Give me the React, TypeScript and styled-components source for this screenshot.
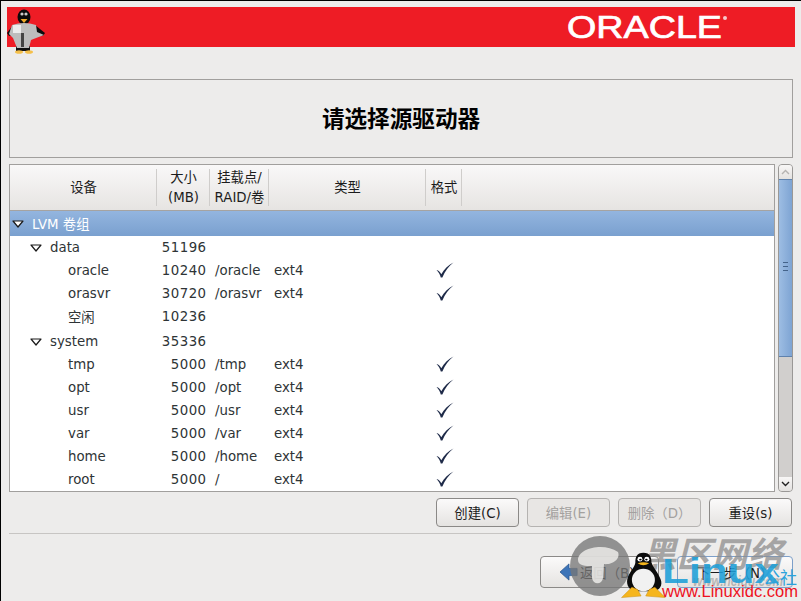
import React from "react";
import styled, { createGlobalStyle } from "styled-components";

const CJK = `"DejaVu Sans", "Noto Sans CJK SC", sans-serif`;

const Global = createGlobalStyle`
  html, body { margin: 0; padding: 0; background: #edeceb; }
  #root { width: 801px; height: 601px; overflow: hidden; }
`;

const Screen = styled.div`
  position: relative;
  box-sizing: border-box;
  width: 801px;
  height: 601px;
  overflow: hidden;
  background: #edeceb;
  border-top: 1px solid #000;
  border-left: 1px solid #000;
  font-family: ${CJK};
  font-size: 13.33px;
  color: #2e3436;
  display: flex;
  flex-direction: column;
  padding: 6px 6px 0 6px;
`;

const Banner = styled.header`
  flex: none;
  height: 40px;
  background: #ee1c25;
  display: flex;
  justify-content: flex-end;
  align-items: flex-start;
  position: relative;
`;

const OracleMark = styled.svg`
  width: 170px;
  height: 40px;
  margin-right: 59px;
`;

const TuxBadge = styled.svg`
  position: absolute;
  left: -1px;
  top: 2px;
  width: 40px;
  height: 48px;
`;

const TitleBox = styled.section`
  flex: none;
  box-sizing: border-box;
  margin: 32px 2px 0 2px;
  height: 79px;
  border: 1px solid #a19f9d;
  display: flex;
  align-items: center;
  justify-content: center;
  padding-bottom: 2px;
  font-size: 22.6px;
  font-weight: 700;
  color: #000;
  font-family: "Noto Sans CJK SC", sans-serif;
`;

const TreeArea = styled.div`
  flex: none;
  display: flex;
  gap: 3px;
  margin: 6px 0 0 2px;
  height: 328px;
`;

const Tree = styled.div`
  box-sizing: border-box;
  width: 766px;
  border: 1px solid #a19f9d;
  background: #fff;
  overflow: hidden;
`;

const columns = "147px 53px 59px 157px 36px 1fr";

const HeaderRow = styled.div`
  display: grid;
  grid-template-columns: ${columns};
  height: 45px;
  background: linear-gradient(#f9f8f8, #e6e4e2);
  border-bottom: 1px solid #a5a3a1;
  align-items: stretch;
  color: #1c1c1c;
`;

const HeaderCell = styled.div`
  display: flex;
  align-items: center;
  justify-content: center;
  text-align: center;
  line-height: 20px;
  position: relative;
  &::after {
    content: "";
    position: absolute;
    right: 0;
    top: 4px;
    bottom: 4px;
    width: 1px;
    background: #cfcdcb;
  }
`;

const HeaderFill = styled.div``;

const Row = styled.div<{ $h?: number; $lift?: number; $selected?: boolean }>`
  display: grid;
  grid-template-columns: ${columns};
  box-sizing: border-box;
  height: ${(p) => p.$h ?? 23}px;
  padding-bottom: ${(p) => p.$lift ?? 0}px;
  align-items: center;
  color: ${(p) => (p.$selected ? "#fff" : "#2e3436")};
  background: ${(p) =>
    p.$selected ? "linear-gradient(#93b5df, #7aa0cf)" : "transparent"};
`;

const NameCell = styled.div<{ $depth: number }>`
  display: flex;
  align-items: center;
  padding-left: ${(p) => [2, 20, 58][p.$depth]}px;
  white-space: nowrap;
`;

const Arrow = styled.svg`
  flex: none;
  width: 12px;
  height: 8px;
  margin-right: 8px;
`;

const SizeCell = styled.div`
  text-align: right;
  padding-right: 3.5px;
  letter-spacing: 0.45px;
`;

const MountCell = styled.div`
  padding-left: 5px;
`;

const TypeCell = styled.div`
  padding-left: 5px;
`;

const FormatCell = styled.div`
  display: flex;
  justify-content: center;
  padding-left: 2px;
`;

const Check = styled.svg`
  display: block;
  width: 18px;
  height: 16px;
  margin-top: -1px;
`;

const ScrollBar = styled.div`
  box-sizing: border-box;
  width: 15px;
  display: flex;
  flex-direction: column;
  background: #d1cfcd;
  border: 1px solid #9a9896;
  border-radius: 4px;
  overflow: hidden;
`;

const ScrollButton = styled.div`
  flex: none;
  height: 14px;
  background: linear-gradient(#f8f7f6, #e4e2e0);
  display: flex;
  align-items: center;
  justify-content: center;
`;

const ScrollThumb = styled.div`
  flex: none;
  height: 178px;
  box-sizing: border-box;
  background: linear-gradient(90deg, #9dbde3, #7ea4d3);
  border-top: 1px solid #5f82ad;
  border-bottom: 1px solid #5f82ad;
  display: flex;
  align-items: center;
  justify-content: center;
  padding-bottom: 4px;
`;

const ThumbGrip = styled.div`
  width: 5px;
  height: 7px;
  border-top: 1px solid #44638a;
  border-bottom: 1px solid #44638a;
  position: relative;
  &::after {
    content: "";
    position: absolute;
    left: 0;
    right: 0;
    top: 3px;
    height: 1px;
    background: #44638a;
  }
`;

const ScrollTrack = styled.div`
  flex: 1;
`;

const ActionBar = styled.div`
  flex: none;
  display: flex;
  justify-content: flex-end;
  gap: 8px;
  margin: 6px 3px 0 0;
`;

const Button = styled.div<{ $disabled?: boolean; $focus?: boolean; $w?: number; $h?: number }>`
  box-sizing: border-box;
  width: ${(p) => p.$w ?? 83}px;
  height: ${(p) => p.$h ?? 29}px;
  border: 1px solid
    ${(p) => (p.$focus ? "#7d9fc9" : p.$disabled ? "#b5b3b1" : "#8b8987")};
  border-radius: 4px;
  background: ${(p) =>
    p.$disabled ? "#e8e6e4" : "linear-gradient(#fbfafa, #e5e3e1)"};
  color: ${(p) => (p.$disabled ? "#a3a19f" : "#1c1c1c")};
  display: flex;
  align-items: center;
  justify-content: center;
  gap: 4px;
  white-space: nowrap;
`;

const BackButton = styled(Button)`
  justify-content: flex-start;
  padding-left: 18px;
  gap: 1px;
`;

const Divider = styled.hr`
  flex: none;
  width: 783px;
  margin: 6px 0 0 2px;
  border: none;
  border-top: 1px solid #c7c5c3;
`;

const NavBar = styled.div`
  flex: none;
  display: flex;
  justify-content: flex-end;
  gap: 18px;
  margin: 22px 2px 0 0;
`;

const NavIcon = styled.svg`
  flex: none;
  width: 20px;
  height: 18px;
`;

const Watermark = styled.svg`
  position: absolute;
  left: 558px;
  top: 529px;
  width: 241px;
  height: 70px;
  pointer-events: none;
`;

const ArrowIcon = () => (
  <Arrow viewBox="0 0 12 8">
    <path
      d="M1 1 H11 L6 7 Z"
      fill="#fff"
      stroke="#1a1a1a"
      strokeWidth="1.2"
      strokeLinejoin="round"
    />
  </Arrow>
);

const CheckMark = () => (
  <Check viewBox="0 0 17 15">
    <path
      d="M0.5 7.5 C2.5 8 4 9.5 5 11.5 C7.5 7 11.5 3 16.5 0.5 C12 4 8.5 9 6 14.5 L4.5 14.5 C4 12 2.5 9.5 0.5 7.5 Z"
      fill="#1e2a48"
    />
  </Check>
);

type Item = {
  name: string;
  size: string;
  mount?: string;
  type?: string;
  depth: number;
  open?: boolean;
  check?: boolean;
  h?: number;
  lift?: number;
};

const items: Item[] = [
  { name: "data", size: "51196", depth: 1, open: true },
  { name: "oracle", size: "10240", mount: "/oracle", type: "ext4", depth: 2, check: true },
  { name: "orasvr", size: "30720", mount: "/orasvr", type: "ext4", depth: 2, check: true },
  { name: "空闲", size: "10236", depth: 2, h: 25, lift: 3 },
  { name: "system", size: "35336", depth: 1, open: true },
  { name: "tmp", size: "5000", mount: "/tmp", type: "ext4", depth: 2, check: true },
  { name: "opt", size: "5000", mount: "/opt", type: "ext4", depth: 2, check: true },
  { name: "usr", size: "5000", mount: "/usr", type: "ext4", depth: 2, check: true },
  { name: "var", size: "5000", mount: "/var", type: "ext4", depth: 2, check: true },
  { name: "home", size: "5000", mount: "/home", type: "ext4", depth: 2, check: true },
  { name: "root", size: "5000", mount: "/", type: "ext4", depth: 2, check: true },
];

const Penguin = () => (
  <g>
    <path d="M16 1 C10 1 9 7 9 13 C9 18 3 26 2 34 C1 42 4 47 8 49 L26 49 C30 47 33 42 31 34 C29 26 24 18 23 13 C23 7 22 1 16 1 Z" fill="#0c0c0c" />
    <ellipse cx="16" cy="35" rx="10" ry="14" fill="#f1f1f1" />
    <ellipse cx="13" cy="9" rx="2.2" ry="3" fill="#fff" />
    <ellipse cx="19" cy="9" rx="2.2" ry="3" fill="#fff" />
    <circle cx="13.4" cy="9.5" r="1.1" fill="#000" />
    <circle cx="18.6" cy="9.5" r="1.1" fill="#000" />
    <path d="M11 14 Q16 11.5 21 14 Q16 19 11 14 Z" fill="#f5b51c" />
    <path d="M6 44 L11 47 L14 55 L-3 57 Z" fill="#f5b51c" stroke="#c98c10" strokeWidth="0.5" />
    <path d="M26 44 L21 47 L18 55 L35 57 Z" fill="#f5b51c" stroke="#c98c10" strokeWidth="0.5" />
  </g>
);

export default function App() {
  return (
    <>
      <Global />
      <Screen>
        <Banner>
          <OracleMark viewBox="0 0 170 40">
            <text
              x="1"
              y="31"
              textLength="155"
              lengthAdjust="spacingAndGlyphs"
              fontFamily="'Liberation Sans', sans-serif"
              fontSize="31"
              fontWeight="400"
              stroke="#fff"
              strokeWidth="0.7"
              fill="#fff"
            >
              ORACLE
            </text>
            <circle cx="159" cy="11" r="2" fill="#f7c9cb" />
          </OracleMark>
          <TuxBadge viewBox="6 9 40 48">
            <ellipse cx="24" cy="17" rx="6.5" ry="7.5" fill="#0a0a0a" />
            <circle cx="22" cy="14" r="1.6" fill="#ccc" />
            <circle cx="26" cy="14" r="1.6" fill="#ccc" />
            <path d="M20.5 19 L27.5 19 L24 23 Z" fill="#f0a928" />
            <path d="M13 25 L7 33 L9 36 L16 34 Z M35 25 L45 33 L43 36 L34 34 Z" fill="#0c0c0c" />
            <path d="M16 46 H30 V51 H16 Z" fill="#111" />
            <path d="M12 25 Q24 21 36 25 L37 32 L44 35 Q36 38 31 40 L29 48 L17 48 L13 38 L9 34 Z" fill="#bdbdbd" />
            <rect x="13" y="25" width="8" height="8" fill="#ececec" />
            <rect x="21" y="33" width="3" height="14" fill="#444" />
            <ellipse cx="19" cy="52" rx="4" ry="1.8" fill="#f5c04a" />
            <ellipse cx="29" cy="52" rx="4" ry="1.8" fill="#f5c04a" />
          </TuxBadge>
        </Banner>

        <TitleBox>请选择源驱动器</TitleBox>

        <TreeArea>
          <Tree>
            <HeaderRow>
              <HeaderCell>设备</HeaderCell>
              <HeaderCell>
                大小
                <br />
                (MB)
              </HeaderCell>
              <HeaderCell>
                挂载点/
                <br />
                RAID/卷
              </HeaderCell>
              <HeaderCell>类型</HeaderCell>
              <HeaderCell>格式</HeaderCell>
              <HeaderFill />
            </HeaderRow>
            <Row $h={25} $selected>
              <NameCell $depth={0}>
                <ArrowIcon />
                LVM 卷组
              </NameCell>
            </Row>
            {items.map((it) => (
              <Row key={it.name} $h={it.h} $lift={it.lift}>
                <NameCell $depth={it.depth}>
                  {it.open && <ArrowIcon />}
                  {it.name}
                </NameCell>
                <SizeCell>{it.size}</SizeCell>
                <MountCell>{it.mount}</MountCell>
                <TypeCell>{it.type}</TypeCell>
                <FormatCell>{it.check && <CheckMark />}</FormatCell>
              </Row>
            ))}
          </Tree>
          <ScrollBar>
            <ScrollButton>
              <svg width="9" height="6" viewBox="0 0 9 6">
                <path d="M1 5 L4.5 1.5 L8 5" fill="none" stroke="#b5b3b1" strokeWidth="1.4" />
              </svg>
            </ScrollButton>
            <ScrollThumb>
              <ThumbGrip />
            </ScrollThumb>
            <ScrollTrack />
            <ScrollButton>
              <svg width="9" height="6" viewBox="0 0 9 6">
                <path d="M1 1 L4.5 4.5 L8 1" fill="none" stroke="#222" strokeWidth="1.4" />
              </svg>
            </ScrollButton>
          </ScrollBar>
        </TreeArea>

        <ActionBar>
          <Button>创建(C)</Button>
          <Button $disabled>编辑(E)</Button>
          <Button $disabled>删除（D）</Button>
          <Button>重设(s)</Button>
        </ActionBar>

        <Divider />

        <NavBar>
          <BackButton $w={119} $h={32}>
            <NavIcon viewBox="0 0 22 20">
              <path d="M1 10 L11 1 V6 H20 V14 H11 V19 Z" fill="#3d74b8" stroke="#24528c" strokeWidth="0.8" />
            </NavIcon>
            返回（B）
          </BackButton>
          <Button $w={116} $h={32} $focus>
            下一步（N）
          </Button>
        </NavBar>

        <Watermark viewBox="0 0 241 70">
          <circle cx="41" cy="36" r="30" fill="#777" fillOpacity="0.78" />
          <path d="M19 30 C19 18 45 12 59 22 C62 30 52 35 45 34 L44 48 C43 55 34 55 33 48 L33 36 C27 36 19 36 19 30 Z" fill="#f1f0ee" fillOpacity="0.8" />
          <text
            x="82"
            y="37"
            textLength="142"
            lengthAdjust="spacingAndGlyphs"
            fontFamily="'Noto Sans CJK SC', sans-serif"
            fontSize="35"
            fontWeight="700"
            fontStyle="italic"
            fill="#8d8d8d"
            fillOpacity="0.75"
          >
            黑区网络
          </text>
          <text
            x="134"
            y="56"
            textLength="90"
            lengthAdjust="spacingAndGlyphs"
            fontFamily="'Liberation Sans', sans-serif"
            fontSize="14"
            fontWeight="700"
            fontStyle="italic"
            fill="#777"
            fillOpacity="0.45"
          >
            www.heiqu.com
          </text>
          <text
            x="103"
            y="53"
            textLength="117"
            lengthAdjust="spacingAndGlyphs"
            fontFamily="'Liberation Sans', sans-serif"
            fontSize="35"
            fontWeight="700"
            fill="#1e9fd8"
            fillOpacity="0.88"
          >
            Linux
          </text>
          <text x="204" y="54" fontFamily="'Noto Sans CJK SC', sans-serif" fontSize="17" fill="#2aa3dc">
            公社
          </text>
          <g transform="translate(66 22) scale(1.15 0.8)">
            <Penguin />
          </g>
          <text
            x="103"
            y="67"
            textLength="136"
            lengthAdjust="spacingAndGlyphs"
            fontFamily="'Liberation Sans', sans-serif"
            fontSize="17"
            fill="#ee1122"
          >
            www.Linuxidc.com
          </text>
        </Watermark>
      </Screen>
    </>
  );
}
